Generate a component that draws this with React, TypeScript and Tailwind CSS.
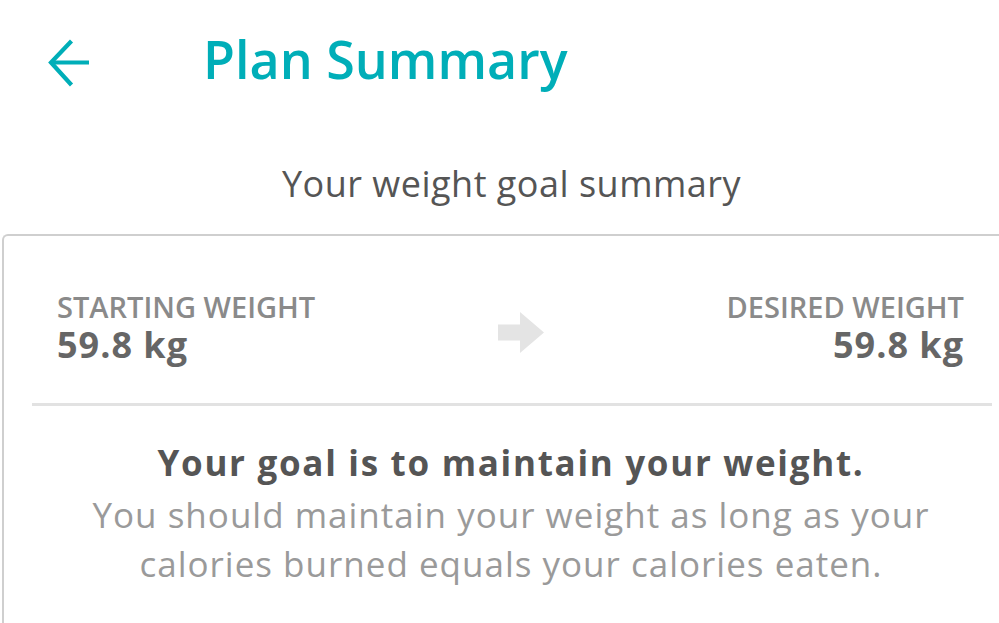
export default function App() {
  return (
    <div
      className="flex h-[623px] w-[999px] flex-col overflow-hidden bg-white"
      style={{ fontFamily: "'Open Sans', Lato, sans-serif" }}
    >
      <header className="flex h-[124px] shrink-0 items-start pt-[33px]">
        <svg
          width="44"
          height="48"
          viewBox="0 0 44 48"
          className="ml-[47px] mt-[6px]"
          fill="none"
          stroke="#00aeb8"
          strokeWidth="4.2"
        >
          <path d="M42 23.5 H6" />
          <path d="M24.5 2 L4 23.5 L24.5 46" />
        </svg>
        <h1 className="ml-[112px] text-[52px] font-semibold leading-none text-[#00aeb8]">
          Plan Summary
        </h1>
      </header>

      <p className="mt-[42px] text-center text-[36px] leading-none tracking-[0.5px] text-[#555]">
        <span className="ml-[24px]">Your weight goal summary</span>
      </p>

      <section className="ml-[2px] mt-[32px] w-[1020px] flex-1 rounded-tl-[6px] border-l-2 border-t-2 border-[#cfcfcf] pt-[55px]">
        <div className="ml-[53px] flex w-[907px] items-start justify-between">
          <div>
            <div className="text-[29px] font-semibold leading-[32px] text-[#8a8a8a]">STARTING WEIGHT</div>
            <div className="mt-[2px] text-[36px] font-bold leading-[40px] tracking-[1px] text-[#666]">59.8 kg</div>
          </div>
          <svg width="46" height="41" viewBox="0 0 46 41" className="mt-[21px]">
            <path d="M0 12.5 H22 V0 L46 20.5 L22 41 V28.5 H0 Z" fill="#e4e4e4" />
          </svg>
          <div className="text-right">
            <div className="text-[29px] font-semibold leading-[32px] text-[#8a8a8a]">DESIRED WEIGHT</div>
            <div className="mt-[2px] text-[36px] font-bold leading-[40px] tracking-[1px] text-[#666]">59.8 kg</div>
          </div>
        </div>

        <div className="ml-[28px] mt-[38px] h-[3px] w-[960px] bg-[#e2e2e2]" />

        <div className="w-[1014px] pt-[33px] text-center">
          <p className="text-[35px] font-bold leading-[48px] tracking-[1.7px] text-[#555]">
            Your goal is to maintain your weight.
          </p>
          <p className="mt-[3px] text-[35px] leading-[49px] tracking-[1px] text-[#9a9a9a]">
            You should maintain your weight as long as your
            <br />
            calories burned equals your calories eaten.
          </p>
        </div>
      </section>
    </div>
  );
}
